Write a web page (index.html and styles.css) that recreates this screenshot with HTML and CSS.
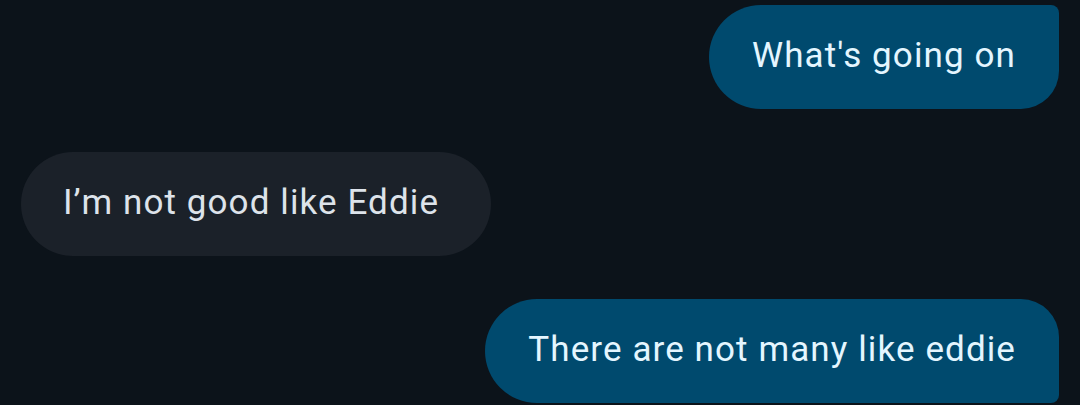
FILE: index.html
```html
<!DOCTYPE html>
<html lang="en">
<head>
<meta charset="utf-8">
<title>Messages</title>
<link rel="stylesheet" href="styles.css">
</head>
<body>
<main class="thread">
  <div class="row row-out">
    <div class="bubble bubble-out bubble-first">What's going on</div>
  </div>
  <div class="row row-in">
    <div class="bubble bubble-in">I’m not good like Eddie</div>
  </div>
  <div class="row row-out">
    <div class="bubble bubble-out bubble-last">There are not many like eddie</div>
  </div>
</main>
</body>
</html>
```
FILE: styles.css
```css
html, body {
  margin: 0;
  padding: 0;
  background: #0c131a;
  height: 100%;
  overflow: hidden;
}

.thread {
  display: flex;
  flex-direction: column;
  gap: 43px;
  padding: 5px 21px 0 21px;
  font-family: Roboto, "Noto Sans", sans-serif;
}

.row {
  display: flex;
}

.row-out {
  justify-content: flex-end;
}

.row-in {
  justify-content: flex-start;
}

.bubble {
  height: 104px;
  box-sizing: border-box;
  display: flex;
  align-items: center;
  padding: 0 43px 4px 43px;
  font-size: 35px;
  letter-spacing: 1.1px;
  white-space: nowrap;
}

.bubble-out {
  background: #004a6e;
  color: #e4f6ff;
}

.bubble-first {
  border-radius: 52px 8px 38px 52px;
}

.bubble-last {
  border-radius: 52px 38px 8px 52px;
}

.bubble-in {
  background: #1b2129;
  color: #dde3ea;
  border-radius: 52px;
  padding-left: 42px;
  padding-right: 52px;
}
```
